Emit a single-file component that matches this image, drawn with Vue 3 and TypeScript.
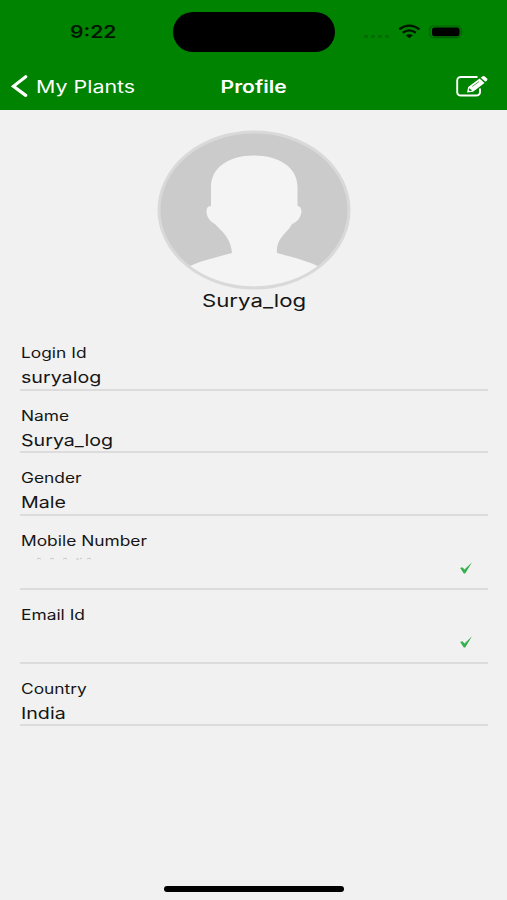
<script setup lang="ts">
interface Field {
  label: string
  value: string
  verified?: boolean
  remnant?: boolean
}

const fields: Field[] = [
  { label: 'Login Id', value: 'suryalog' },
  { label: 'Name', value: 'Surya_log' },
  { label: 'Gender', value: 'Male' },
  { label: 'Mobile Number', value: '', verified: true, remnant: true },
  { label: 'Email Id', value: '', verified: true },
  { label: 'Country', value: 'India' },
]
</script>

<template>
  <div class="screen">
    <header class="top">
      <div class="status">
        <div class="side"><span class="wide clock">9:22</span></div>
        <div class="island"></div>
        <div class="side">
          <svg class="indicators" viewBox="0 0 104 20" width="104" height="20">
            <g fill="#046a04">
              <rect x="4" y="15" width="4" height="2.8" rx="1" />
              <rect x="11" y="15" width="4" height="2.8" rx="1" />
              <rect x="18" y="15" width="4" height="2.8" rx="1" />
              <rect x="25" y="15" width="4" height="2.8" rx="1" />
            </g>
            <g fill="none" stroke="#001500" stroke-width="2.3">
              <path d="M39.2 9.3Q49.3 2 59.4 9.3" />
              <path d="M42.8 12.7Q49.3 8 55.8 12.7" />
            </g>
            <path d="M45.7 15.3Q49.3 13 52.9 15.3L49.3 18.2Z" fill="#001500" />
            <rect x="69.6" y="6" width="31.4" height="11.6" rx="4" fill="none" stroke="#046004" stroke-width="1.2" />
            <rect x="72" y="7.6" width="27.5" height="8.6" rx="2.6" fill="#000" />
            <path d="M102.6 10q2 2 0 4z" fill="#046004" />
          </svg>
        </div>
      </div>
      <nav class="nav">
        <a class="back">
          <svg viewBox="0 0 17 23" width="17" height="23">
            <path d="M14.7 1.8L2.4 11.3L14.7 20.4" fill="none" stroke="#fff" stroke-width="3.2" stroke-linecap="round" stroke-linejoin="miter" />
          </svg>
          <span class="wide back-text">My Plants</span>
        </a>
        <h1 class="title"><span class="wide title-text">Profile</span></h1>
        <div class="edit">
          <svg viewBox="0 0 34 24" width="34" height="24">
            <path d="M22.5 2H6.2Q2.2 2 2.2 5.5V17Q2.2 20.5 6.2 20.5H20.8Q25 20.5 25 17V13.5" fill="none" stroke="#fff" stroke-width="1.9" />
            <path d="M12 17.4L13.2 11.9L24.6 3.5L29.5 7.9L18 16.7Z" fill="#fff" />
            <path d="M25.7 2.7L27.3 1.4Q28.5 .6 29.8 1.6L32 3.5Q32.9 4.4 31.9 5.5L30.5 6.8Z" fill="#fff" />
            <path d="M17.3 11.4L24 6.6" stroke="#008300" stroke-width=".7" />
            <path d="M14.3 13.3L17 15.6L15.1 16.2L13.7 15Z" fill="#008300" />
          </svg>
        </div>
      </nav>
    </header>

    <main class="content">
      <section class="person">
        <svg class="avatar" viewBox="0 0 194 160" width="194" height="160">
          <defs>
            <clipPath id="face"><ellipse cx="97" cy="80" rx="94" ry="77" /></clipPath>
          </defs>
          <ellipse cx="97" cy="80" rx="95" ry="78" fill="#cbcbcb" />
          <path
            clip-path="url(#face)"
            d="M97 25.5C71 25.5 54 38 54 57V76C50 76 49.5 79 49.5 82C50 88 54 92 58 94C63 100 74 107 75 123C57 128 42 131 29 138V160H165V138C151 131 135 127 120 123C119 107 131 103 135 94C141 92 144 86 144.5 82C144.5 78 143 76 140.5 76V57C140.5 38 123 25.5 97 25.5Z"
            fill="#f4f4f4"
          />
          <ellipse cx="97" cy="80" rx="95" ry="78" fill="none" stroke="#d9d9d9" stroke-width="3" />
        </svg>
        <span class="wide person-name">Surya_log</span>
      </section>

      <dl class="fields">
        <div v-for="field in fields" :key="field.label" class="field" :class="{ tall: field.verified }">
          <dt class="label"><span class="wide label-text">{{ field.label }}</span></dt>
          <dd class="value">
            <span v-if="field.value" class="wide value-text">{{ field.value }}</span>
            <svg v-if="field.remnant" class="remnant" viewBox="0 0 60 3" width="60" height="3">
              <path d="M1 2Q3 .5 5 2M14 2Q16 .5 18 2M27 2Q29 .5 31 2M40 2H43M44 2L46 1M51 2Q53 .5 55 2" fill="none" stroke="#c4c4c4" stroke-width=".9" />
            </svg>
            <svg v-if="field.verified" class="tick" viewBox="0 0 14 14" width="14" height="14">
              <path d="M1.2 7L3.3 6.2L5.5 8.4L13 1.3L6.2 12.4H4.8Z" fill="#35b04b" />
            </svg>
          </dd>
        </div>
      </dl>
    </main>
    <div class="home"></div>
  </div>
</template>

<style>
body {
  margin: 0;
  background: #f1f1f1;
}
</style>

<style scoped>
.screen {
  display: flex;
  flex-direction: column;
  width: 507px;
  height: 900px;
  overflow: hidden;
  background: #f1f1f1;
  color: #151515;
  font-family: Inter, "Liberation Sans", sans-serif;
}
.wide {
  display: inline-block;
  white-space: nowrap;
  transform: scaleX(1.24);
  transform-origin: left center;
}
.top {
  flex: none;
  height: 109.5px;
  background: #008300;
}
.status {
  display: grid;
  grid-template-columns: 173px 162px 1fr;
  height: 64px;
  box-sizing: border-box;
  padding-top: 12px;
}
.island {
  height: 39.5px;
  border-radius: 20px;
  background: #000;
}
.clock {
  margin: 9px 0 0 70px;
  font-size: 17px;
  line-height: 22px;
  font-weight: 600;
  color: #001800;
}
.indicators {
  display: block;
  margin: 8px 0 0 25px;
}
.nav {
  display: grid;
  grid-template-columns: 1fr auto 1fr;
  align-items: center;
  height: 45px;
  color: #fff;
}
.back {
  display: flex;
  align-items: center;
  gap: 8px;
  padding-left: 11px;
}
.back-text {
  font-size: 17px;
  line-height: 24px;
  transform: scaleX(1.26);
}
.title {
  margin: 0;
  font-size: 17px;
  line-height: 24px;
  font-weight: 600;
}
.title-text {
  transform-origin: center;
}
.edit {
  display: flex;
  justify-content: flex-end;
  padding-right: 18px;
}
.content {
  flex: 1;
}
.person {
  display: flex;
  flex-direction: column;
  align-items: center;
  padding-top: 20px;
}
.avatar {
  display: block;
}
.person-name {
  margin: -1px 0 0 1px;
  font-size: 17.5px;
  line-height: 24px;
  transform: scaleX(1.27);
  transform-origin: center;
}
.fields {
  margin: 15.7px 19px 0 20px;
}
.field {
  box-sizing: border-box;
  height: 62.6px;
  padding-top: 14px;
  border-bottom: 2px solid #dcdcdc;
}
.field.tall {
  height: 73.8px;
}
.label {
  height: 20px;
  font-size: 14px;
  line-height: 22px;
}
.value {
  display: flex;
  align-items: center;
  height: 26px;
  margin: 0;
  font-size: 16.5px;
  line-height: 26px;
}
.label-text {
  margin-left: 0.6px;
}
.value-text {
  margin-left: 0.6px;
  padding-top: 4px;
  transform: scaleX(1.19);
}
.tall .value {
  height: 36px;
}
.remnant {
  align-self: flex-start;
  margin: 7px 0 0 16px;
}
.tick {
  margin: 0 15.5px 0 auto;
}
.home {
  flex: none;
  width: 180px;
  height: 5.5px;
  margin: 0 auto 8.5px;
  border-radius: 3px;
  background: #000;
}
</style>
